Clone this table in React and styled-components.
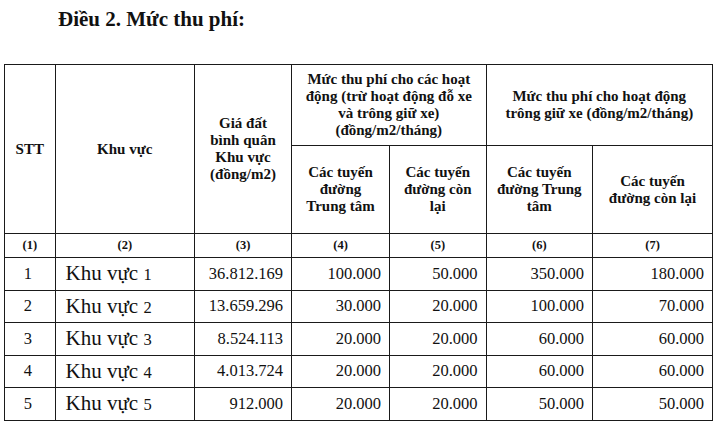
import React from "react";
import styled, { createGlobalStyle } from "styled-components";

const Global = createGlobalStyle`
  html, body { margin: 0; padding: 0; background: #fff; }
  body { font-family: "Liberation Serif", "Times New Roman", serif; color: #111; }
`;

const Page = styled.div`
  width: 720px;
  height: 431px;
  overflow: hidden;
  background: #fff;
`;

const Title = styled.h2`
  margin: 9px 0 0 58px;
  height: 21px;
  font-size: 21px;
  line-height: 21px;
  font-weight: 700;
  color: #111;
`;

const Table = styled.table`
  margin: 34px 0 0 4px;
  border-collapse: collapse;
  table-layout: fixed;
  width: 708px;
  color: #111;
`;

const H = styled.th`
  border: 1.5px solid #1a1a1a;
  font-size: 15px;
  line-height: 17px;
  font-weight: 700;
  text-align: center;
  vertical-align: middle;
  padding: 0 4px;
  height: ${(p) => p.$h || "auto"};
`;

const NumCell = styled.td`
  border: 1.5px solid #1a1a1a;
  font-size: 12.5px;
  font-weight: 700;
  text-align: center;
  height: 23px;
  padding: 0;
`;

const Cell = styled.td`
  border: 1.5px solid #1a1a1a;
  font-size: 16.5px;
  text-align: ${(p) => p.$align || "right"};
  padding: 0 8px 0 ${(p) => (p.$align === "left" ? "10px" : "4px")};
  height: 31.5px;
  vertical-align: middle;
`;

const Area = styled.span`
  font-size: 21px;
`;

const AreaNum = styled.span`
  font-size: 16.5px;
`;

const rows = [
  ["1", "1", "36.812.169", "100.000", "50.000", "350.000", "180.000"],
  ["2", "2", "13.659.296", "30.000", "20.000", "100.000", "70.000"],
  ["3", "3", "8.524.113", "20.000", "20.000", "60.000", "60.000"],
  ["4", "4", "4.013.724", "20.000", "20.000", "60.000", "60.000"],
  ["5", "5", "912.000", "20.000", "20.000", "50.000", "50.000"],
];

export default function App() {
  return (
    <Page>
      <Global />
      <Title>Điều 2. Mức thu phí:</Title>
      <Table>
        <colgroup>
          <col style={{ width: "50.5px" }} />
          <col style={{ width: "139.5px" }} />
          <col style={{ width: "97px" }} />
          <col style={{ width: "98px" }} />
          <col style={{ width: "96.5px" }} />
          <col style={{ width: "106.5px" }} />
          <col style={{ width: "120px" }} />
        </colgroup>
        <thead>
          <tr>
            <H rowSpan={2}>STT</H>
            <H rowSpan={2}>Khu vực</H>
            <H rowSpan={2}>
              Giá đất
              <br />
              bình quân
              <br />
              Khu vực
              <br />
              (đồng/m2)
            </H>
            <H colSpan={2} $h="80px">
              Mức thu phí cho các hoạt
              <br />
              động (trừ hoạt động đỗ xe
              <br />
              và trông giữ xe)
              <br />
              (đồng/m2/tháng)
            </H>
            <H colSpan={2}>
              Mức thu phí cho hoạt động
              <br />
              trông giữ xe (đồng/m2/tháng)
            </H>
          </tr>
          <tr>
            <H $h="87px">
              Các tuyến
              <br />
              đường
              <br />
              Trung tâm
            </H>
            <H>
              Các tuyến
              <br />
              đường còn
              <br />
              lại
            </H>
            <H>
              Các tuyến
              <br />
              đường Trung
              <br />
              tâm
            </H>
            <H>
              Các tuyến
              <br />
              đường còn lại
            </H>
          </tr>
          <tr>
            {[1, 2, 3, 4, 5, 6, 7].map((n) => (
              <NumCell key={n}>({n})</NumCell>
            ))}
          </tr>
        </thead>
        <tbody>
          {rows.map((r) => (
            <tr key={r[0]}>
              <Cell $align="center">{r[0]}</Cell>
              <Cell $align="left">
                <Area>Khu vực </Area>
                <AreaNum>{r[1]}</AreaNum>
              </Cell>
              <Cell>{r[2]}</Cell>
              <Cell>{r[3]}</Cell>
              <Cell>{r[4]}</Cell>
              <Cell>{r[5]}</Cell>
              <Cell>{r[6]}</Cell>
            </tr>
          ))}
        </tbody>
      </Table>
    </Page>
  );
}
